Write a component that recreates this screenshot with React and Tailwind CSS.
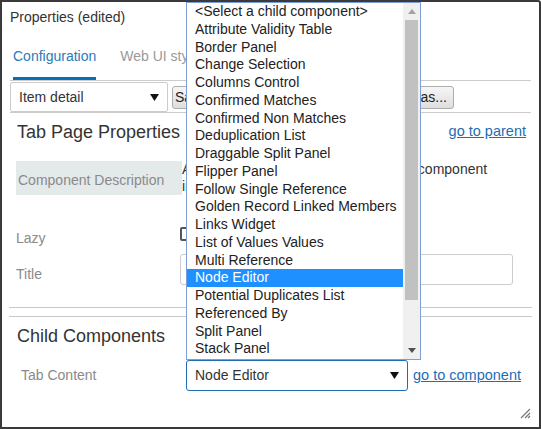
import React from "react";

const items = [
  "<Select a child component>",
  "Attribute Validity Table",
  "Border Panel",
  "Change Selection",
  "Columns Control",
  "Confirmed Matches",
  "Confirmed Non Matches",
  "Deduplication List",
  "Draggable Split Panel",
  "Flipper Panel",
  "Follow Single Reference",
  "Golden Record Linked Members",
  "Links Widget",
  "List of Values Values",
  "Multi Reference",
  "Node Editor",
  "Potential Duplicates List",
  "Referenced By",
  "Split Panel",
  "Stack Panel",
];

const Caret = () => (
  <svg width="9" height="7" viewBox="0 0 9 7">
    <path d="M0 0 L9 0 L4.5 7 Z" fill="#111" />
  </svg>
);

const App = () => {
  return (
    <div className="relative w-[541px] h-[429px] overflow-hidden bg-white border-2 border-[#3a3a3a] rounded-tr-[3px] font-['Liberation_Sans',Arial,sans-serif] text-[14px] text-[#333]">
      {/* Title */}
      <div className="px-[8px] pt-[7px] leading-[16px]">Properties (edited)</div>

      {/* Tabs */}
      <div className="mx-[8px] flex gap-[24px] border-b border-[#ccc] pl-[3px] leading-[16px]">
        <div className="pt-[23px] pb-[13px] border-b-[3px] border-[#0a6eb4] text-[#2b7bbb]">Configuration</div>
        <div className="pt-[23px] pb-[13px] text-[#9a9a9a]">Web UI style</div>
      </div>

      {/* Toolbar */}
      <div className="mx-[8px] flex items-center gap-[4px] pt-[1px] pr-[77px] border-b border-[#ccc]">
        <div className="w-[158px] h-[30px] border border-[#ccc] rounded-[2px] flex items-center justify-between pl-[8px] pr-[8px]">
          <span>Item detail</span>
          <Caret />
        </div>
        <button className="h-[23px] px-[2px] border border-[#adadad] rounded-[3px] bg-gradient-to-b from-[#f6f6f6] to-[#dedede] text-[#222] leading-[20px]">Save</button>
        <button className="h-[23px] px-[6px] border border-[#adadad] rounded-[3px] bg-gradient-to-b from-[#f6f6f6] to-[#dedede] text-[#222] leading-[20px]">Revert</button>
        <button className="ml-auto h-[23px] pl-[2px] pr-[6px] border border-[#adadad] rounded-[3px] bg-gradient-to-b from-[#f6f6f6] to-[#dedede] text-[#222] leading-[20px]">Save as...</button>
      </div>

      {/* Tab page properties */}
      <div className="mx-[8px] mt-[8px] flex items-center justify-between pl-[7px] pr-[5px]">
        <h2 className="text-[18px] leading-[22px]">Tab Page Properties</h2>
        <a className="text-[#1f6db3] underline leading-[16px] -mt-[3px] text-[14.5px]">go to parent</a>
      </div>

      <div className="ml-[14px] mt-[18px]">
        <div className="flex items-start">
          <div className="w-[166px] h-[34px] bg-[#e4e9ea] flex items-center pl-[2px] pt-[4px] text-[#8a8a8a]">Component Description</div>
          <div className="w-[331px] leading-[17px] whitespace-nowrap">
            <div>A page of a tabbed panel that holds a component</div>
            <div>in the parent panel.</div>
          </div>
        </div>

        <div className="flex items-start mt-[32px] h-[14px]">
          <div className="w-[164px] pt-[3px] leading-[16px] text-[#8a8a8a]">Lazy</div>
          <div className="w-[14px] h-[14px] border-2 border-[#555] rounded-[2px]" />
        </div>

        <div className="flex items-start mt-[13px]">
          <div className="w-[164px] pt-[12px] leading-[16px] text-[#8a8a8a]">Title</div>
          <div className="w-[333px] h-[31px] border border-[#ccc] rounded-[3px]" />
        </div>
      </div>

      {/* Separators */}
      <div className="mx-[7px] mt-[22px] border-t border-[#c8c8c8]" />
      <div className="mx-[7px] mt-[8px] border-t border-[#c8c8c8]" />

      {/* Child components */}
      <div className="mx-[8px] mt-[8px] pl-[7px]">
        <h2 className="text-[18px] leading-[22px]">Child Components</h2>
      </div>
      <div className="mx-[8px] mt-[13px] pl-[11px] flex items-center">
        <div className="w-[165px] text-[#8a8a8a]">Tab Content</div>
        <div className="w-[222px] h-[31px] border border-[#1f6db3] rounded-[3px] flex items-center justify-between pl-[8px] pr-[8px]">
          <span>Node Editor</span>
          <Caret />
        </div>
        <a className="ml-[5px] text-[#1f6db3] underline text-[14.5px]">go to component</a>
      </div>

      {/* Resize grip */}
      <svg className="absolute right-[8px] bottom-[8px]" width="12" height="12" viewBox="0 0 12 12">
        <path d="M11 2 L2 11 M11 6 L6 11 M11 9 L9 11" stroke="#777" strokeWidth="1.2" />
      </svg>

      {/* Open dropdown list */}
      <div className="absolute left-[184px] top-0 w-[235px] h-[358px] bg-white border border-[#7d9fd9] flex">
        <div className="flex-1">
          {items.map((it) => (
            <div
              key={it}
              className={`h-[17.75px] leading-[17.75px] pl-[8px] whitespace-nowrap ${
                it === "Node Editor" ? "bg-[#1e90ff] text-white" : "text-[#222]"
              }`}
            >
              {it}
            </div>
          ))}
        </div>
        <div className="w-[17px] bg-[#f0f0f0] flex flex-col items-center">
          <div className="h-[17px] flex items-center justify-center">
            <svg width="8" height="5" viewBox="0 0 8 5">
              <path d="M0 5 L4 0 L8 5 Z" fill="#a3a3a3" />
            </svg>
          </div>
          <div className="w-[13px] h-[280px] bg-[#c1c1c1]" />
          <div className="flex-1" />
          <div className="h-[17px] flex items-center justify-center">
            <svg width="8" height="5" viewBox="0 0 8 5">
              <path d="M0 0 L8 0 L4 5 Z" fill="#505050" />
            </svg>
          </div>
        </div>
      </div>
    </div>
  );
};

export default App;
